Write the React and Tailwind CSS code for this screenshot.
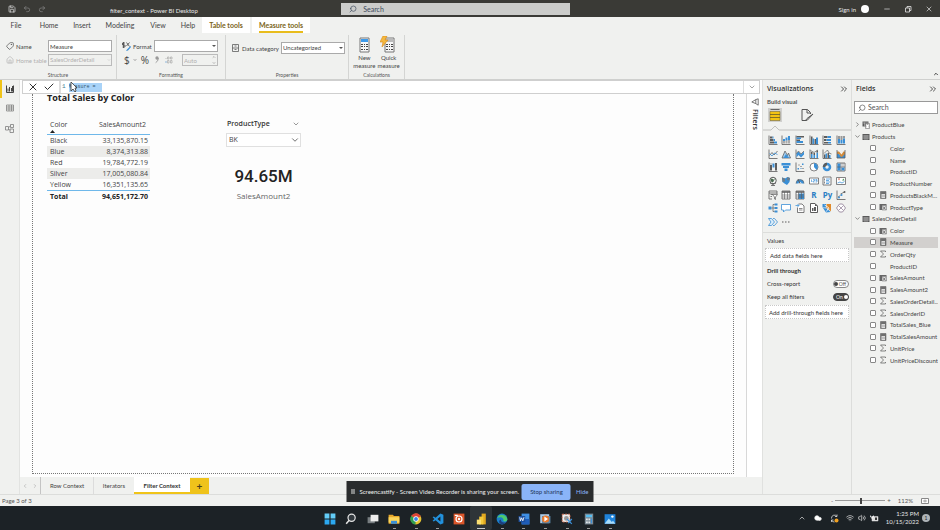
import React, { useState } from 'react';
import { ChevronDown, ChevronRight, ChevronUp, ChevronsRight, Search, X, Check, Minus, Undo2, Redo2, Save, Tag, House, Wifi, Volume2, Cloud } from 'lucide-react';

const INK = '#5c5c5c';
const BLUE = '#3a8fd6';

const menuTabs = [
  { name: 'File', cls: 'w-8' },
  { name: 'Home', cls: 'w-[34px]' },
  { name: 'Insert', cls: 'w-8' },
  { name: 'Modeling', cls: 'w-11' },
  { name: 'View', cls: 'w-8' },
  { name: 'Help', cls: 'w-7' },
];

const salesRows = [
  ['Black', '33,135,870.15'],
  ['Blue', '8,374,313.88'],
  ['Red', '19,784,772.19'],
  ['Silver', '17,005,080.84'],
  ['Yellow', '16,351,135.65'],
];

const fieldTree = [
  { name: 'ProductBlue', kind: 'calcTable', group: true },
  { name: 'Products', kind: 'table', group: true, open: true },
  { name: 'Color' },
  { name: 'Name' },
  { name: 'ProductID' },
  { name: 'ProductNumber' },
  { name: 'ProductsBlackM...', kind: 'measure' },
  { name: 'ProductType', kind: 'column' },
  { name: 'SalesOrderDetail', kind: 'table', group: true, open: true },
  { name: 'Color', kind: 'column' },
  { name: 'Measure', kind: 'measure', selected: true },
  { name: 'OrderQty', kind: 'sum' },
  { name: 'ProductID' },
  { name: 'SalesAmount', kind: 'column' },
  { name: 'SalesAmount2', kind: 'measure' },
  { name: 'SalesOrderDetail...', kind: 'sum' },
  { name: 'SalesOrderID', kind: 'sum' },
  { name: 'TotalSales_Blue', kind: 'measure' },
  { name: 'TotalSalesAmount', kind: 'measure' },
  { name: 'UnitPrice', kind: 'sum' },
  { name: 'UnitPriceDiscount', kind: 'sum' },
];

// ---------- visual gallery icons, all on a 20x20 grid ----------
const Axis = () => <path d="M2 1v18h17" stroke={INK} strokeWidth="1.6" fill="none" />;

const visuals = [
  { name: 'Stacked bar chart', art: <><Axis /><path d="M4 3h5v4H4zM4 8h7v4H4zM4 13h8v4H4z" fill={INK} /><path d="M9 3h2v4H9zM11 8h3v4h-3zM12 13h6v4h-6z" fill={BLUE} /></> },
  { name: 'Stacked column chart', art: <><Axis /><path d="M4 11h4v6H4zM9 11h4v6H9zM14 8h4v9h-4z" fill="#aaa" /><path d="M4 8h4v4H4zM9 5h4v6H9zM14 2h4v8h-4z" fill={BLUE} /></> },
  { name: 'Clustered bar chart', art: <><Axis /><path d="M3 2h15v3H3zM3 9h7v3H3z" fill={INK} /><path d="M3 5h9v3H3zM3 12h13v4H3z" fill={BLUE} /></> },
  { name: 'Clustered column chart', art: <><Axis /><path d="M4 3h3v15H4zM11 8h3v10h-3z" fill={INK} /><path d="M7 7h3v11H7zM14 5h4v13h-4z" fill={BLUE} /></> },
  { name: '100% stacked bar chart', art: <><Axis /><path d="M4 2h7v4H4zM4 8h5v4H4zM4 14h8v3H4z" fill={INK} /><path d="M11 2h7v4h-7zM9 8h9v4H9zM12 14h6v3h-6z" fill={BLUE} /></> },
  { name: '100% stacked column chart', art: <><Axis /><path d="M4 2h4v6H4zM9 2h4v8H9zM14 2h4v5h-4z" fill="#999" /><path d="M4 8h4v9H4zM9 10h4v7H9zM14 7h4v10h-4z" fill={BLUE} /></> },
  { name: 'Line chart', art: <><Axis /><path d="M3 13l5-6 4 5 7-8" stroke={INK} strokeWidth="1.6" fill="none" /><path d="M3 9l5 5 5-6 6 3" stroke={BLUE} strokeWidth="1.6" fill="none" /></> },
  { name: 'Area chart', art: <><path d="M2 18l6-14 5 14zM9 18l5-9 5 9z" fill="#9fcdf2" /><path d="M2 18l6-14 5 9 2-5 4 10z" stroke={INK} strokeWidth="1.5" fill="none" /><path d="M5 18l5-8 6 8z" fill={BLUE} /></> },
  { name: 'Stacked area chart', art: <><Axis /><path d="M3 9l4-4 5 6 6-6v6l-6 6-5-5-4 5z" fill={BLUE} /><path d="M3 9l4-5 5 6 6-6" stroke={INK} strokeWidth="1.4" fill="none" /></> },
  { name: 'Line and stacked column chart', art: <><Axis /><path d="M4 10h3v8H4zM9 12h3v6H9zM15 7h3v11h-3z" fill={BLUE} /><path d="M4 6h3v4H4zM9 8h3v4H9zM15 3h3v4h-3z" fill={INK} /><path d="M3 3l7 4 8-5" stroke={INK} strokeWidth="1.4" fill="none" /></> },
  { name: 'Line and clustered column chart', art: <><Axis /><path d="M4 11h3v7H4zM11 8h3v10h-3z" fill={INK} /><path d="M7 9h3v9H7zM14 12h3v6h-3z" fill={BLUE} /><path d="M4 9l7-7 3 6 5 2" stroke={INK} strokeWidth="1.4" fill="none" /></> },
  { name: 'Ribbon chart', art: <><path d="M2 10h4l5 5 4-5h3v8H2z" fill={BLUE} /><path d="M2 5h4l5 6 4-6h3v5l-6 6-3-1-3-5H2z" fill="#d18b3c" /><path d="M2 2v16h16V2" stroke={INK} strokeWidth="1.6" fill="none" /></> },
  { name: 'Waterfall chart', art: <><Axis /><path d="M4 6h4v11H4zM14 2h4v15h-4z" fill={INK} /><path d="M9 3h4v8H9z" fill={BLUE} /><path d="M4 4h5" stroke={INK} /></> },
  { name: 'Funnel chart', art: <path d="M1 2h18v5H1zM4 8h12v4H4zM7 13h6v5H7z" fill={BLUE} /> },
  { name: 'Scatter chart', art: <><Axis /><path d="M5 12h3v3H5zM14 3h3v3h-3zM11 12h2v2h-2z" fill={BLUE} /><path d="M7 5h2v2H7zM15 12h2v2h-2zM11 8h2v2h-2z" fill={INK} /></> },
  { name: 'Pie chart', art: <><circle cx="10" cy="10" r="8" stroke={INK} strokeWidth="1.5" fill="#fff" /><path d="M10 10V2a8 8 0 0 1 5 14z" fill={BLUE} /></> },
  { name: 'Donut chart', art: <><circle cx="10" cy="10" r="6" stroke={BLUE} strokeWidth="5" fill="none" /><path d="M10 4a6 6 0 0 0-6 6" stroke={INK} strokeWidth="5" fill="none" /></> },
  { name: 'Treemap', art: <><path d="M2 2h16v16H2z" stroke={INK} strokeWidth="1.6" fill="#fff" /><path d="M3 3h6v14H3zM11 11h6v6h-6z" fill={BLUE} /><path d="M10 2v16M10 10h8M14 2v8M2 10h8" stroke={INK} strokeWidth="1.2" /></> },
  { name: 'Map', art: <><circle cx="10" cy="9" r="6.5" stroke={INK} strokeWidth="2" fill="#fff" /><path d="M6 5l5 1 1 4-3 3-4-3zM12 4l3 3-1 3z" fill="#4b6b50" /><path d="M4 14q6 5 12 0M10 16v3M6 19h8" stroke={INK} strokeWidth="1.6" fill="none" /></> },
  { name: 'Filled map', art: <><path d="M2 3l6 2 5-3 5 2-1 8-5 6-5-3-4-3z" fill={BLUE} /><path d="M2 3l6 2v6l-5 1zM13 2l5 2-1 5-5-1z" fill="#6d7d8a" /></> },
  { name: 'Gauge', art: <><path d="M2 15a8 8 0 0 1 16 0h-5a3 3 0 0 0-6 0z" fill={BLUE} /><path d="M10 15L6 6" stroke={INK} strokeWidth="2" /><path d="M2 15a8 8 0 0 1 16 0" stroke={INK} strokeWidth="1.2" fill="none" /></> },
  { name: 'Card', art: <><path d="M1 4h18v12H1z" stroke={INK} strokeWidth="1.5" fill="#fff" /><path d="M5 7v5M8 7h3v3H8v2h3M13 7h3v5h-3M13 9h3" stroke={BLUE} strokeWidth="1.3" fill="none" /></> },
  { name: 'Multi-row card', art: <><path d="M2 2h16v16H2z" stroke={INK} strokeWidth="1.6" fill="#fff" /><path d="M5 5v4M5 11v4" stroke={INK} strokeWidth="1.5" /><path d="M8 6h8M8 9h6M8 12h8M8 15h6" stroke={BLUE} strokeWidth="1.5" /></> },
  { name: 'KPI', art: <><path d="M1 3h18v14H1z" stroke={INK} strokeWidth="1.5" fill="#fff" /><path d="M4 5l2 4 2-4z" fill="#c55a3c" /><path d="M12 9l3-4 2 4z" fill="#4c9a5a" /><path d="M3 14l5-2 4 2 5-3" stroke={BLUE} strokeWidth="1.5" fill="none" /></> },
  { name: 'Slicer', art: <><path d="M8 18H2V2h16v6M2 6h16M5 9h5M5 13h3" stroke={INK} strokeWidth="1.6" fill="none" /><path d="M9 9h10l-4 5v5l-2-1v-4z" stroke={INK} strokeWidth="1.4" fill="#fff" /></> },
  { name: 'Table', art: <><path d="M2 2h16v16H2z" stroke={INK} strokeWidth="1.6" fill="#fff" /><path d="M2 4h16" stroke={INK} strokeWidth="3" /><path d="M2 10h16M2 14h16M7 4v14M13 4v14" stroke={INK} strokeWidth="1.2" /></> },
  { name: 'Matrix', art: <><path d="M2 2h16v16H2z" stroke={INK} strokeWidth="1.6" fill="#fff" /><path d="M7 7h11v11H7z" fill={BLUE} /><path d="M2 4h16" stroke={INK} strokeWidth="3" /><path d="M2 10h16M2 14h16M7 4v14M13 4v14" stroke={INK} strokeWidth="1.2" /></> },
  { name: 'R script visual', letters: 'R' },
  { name: 'Python visual', letters: 'Py' },
  { name: 'Key influencers', art: <><Axis /><path d="M4 14l5-3M9 8l8-4" stroke={INK} strokeWidth="1.5" /><circle cx="11" cy="10" r="2" fill={BLUE} /><circle cx="17" cy="4" r="2" fill={INK} /><circle cx="6" cy="15" r="2" fill={BLUE} /></> },
  { name: 'Decomposition tree', art: <><path d="M1 7h6v6H1zM13 1h6v4h-6zM13 8h6v4h-6zM13 15h6v4h-6z" fill={BLUE} /><path d="M7 10h6M13 3h-3v14h3" stroke={INK} strokeWidth="1.4" fill="none" /></> },
  { name: 'Q&A', art: <path d="M1 3h18v11H9l-4 4v-4H1z" stroke={BLUE} strokeWidth="1.6" fill="#fff" /> },
  { name: 'Smart narrative', art: <><path d="M7 2h7l4 4v13H5V9" stroke={INK} strokeWidth="1.6" fill="#fff" /><path d="M1 5h7M5 2l3 3-3 3" stroke={BLUE} strokeWidth="1.5" fill="none" /><path d="M8 11h7M8 14h7" stroke={INK} strokeWidth="1.4" /></> },
  { name: 'Paginated report', art: <><path d="M3 1h9l5 5v13H3z" stroke={INK} strokeWidth="2" fill="#fff" /><path d="M6 10h3v6H6zM10 8h4v8h-4z" fill={INK} /><path d="M12 1v5h5z" fill={INK} /></> },
  { name: 'ArcGIS map', art: <><path d="M1 2h7v7H1z" fill={BLUE} /><path d="M9 2h9v9H9z" fill="#e08a2c" /><path d="M2 10l8 1 7 7-9 1z" fill={BLUE} /><path d="M13 12l5-3v8z" fill="#e08a2c" /><path d="M5 4l8 5-4 8" stroke="#fff" strokeWidth="1.6" fill="none" /></> },
  { name: 'Power Apps', art: <><path d="M7 2h6l6 8-6 8H7l-6-8z" stroke="#8c7a92" strokeWidth="1.6" fill="#fff" /><path d="M6 6l8 8M14 6l-8 8" stroke="#8c7a92" strokeWidth="1.4" /></> },
  { name: 'Power Automate', art: <><path d="M1 3h6l6 7-6 7H1l5-7z" stroke={BLUE} strokeWidth="1.6" fill="#dceefb" /><path d="M10 3h3l6 7-6 7h-3" stroke={BLUE} strokeWidth="1.6" fill="none" /></> },
  { name: 'Get more visuals', art: <path d="M2 9h3v2H2zM8 9h3v2H8zM14 9h3v2h-3z" fill={INK} /> },
];

const FieldIcon = ({ kind }) => {
  if (!kind) return <span className="w-2 shrink-0" />;
  return (
    <svg viewBox="0 0 16 16" className="size-2 shrink-0" aria-hidden="true">
      {kind === 'sum' && <path d="M13 4V2H3l6 6-6 6h10v-2" stroke="#555" strokeWidth="1.4" fill="none" />}
      {kind === 'measure' && (
        <>
          <path d="M3 1h11v14H3z" fill="#777" stroke="#555" />
          <path d="M5 6h7v8H5z" fill="#dcdcdc" />
          <path d="M5 3h7v2H5zM6 8h1v1H6zM8 8h1v1H8zM10 8h1v1h-1zM6 11h1v1H6zM8 11h1v1H8zM10 11h1v1h-1z" fill="#666" />
        </>
      )}
      {kind === 'table' && (
        <>
          <path d="M1 2h14v12H1z" fill="#5a5a5a" />
          <path d="M1 6h14M1 10h14M6 4v10M10 4v10" stroke="#d5d5d5" />
        </>
      )}
      {kind === 'calcTable' && (
        <>
          <path d="M1 1h12v10H1z" fill="#5a5a5a" />
          <path d="M1 4h12M5 3v8" stroke="#d5d5d5" />
          <path d="M7 5h8v10H7z" fill="#fff" stroke="#555" />
          <path d="M9 7h4M9 10h1M12 10h1M9 12h1M12 12h1" stroke="#555" />
        </>
      )}
      {kind === 'column' && (
        <>
          <path d="M1 2h14v3H1zM1 5h5v9H1z" fill="#666" />
          <path d="M6 5h9v9H6z" fill="#ddd" stroke="#666" />
          <path d="M8 7l5 6M13 7l-5 6" stroke="#555" strokeWidth="1.4" />
        </>
      )}
    </svg>
  );
};

const Calculator = ({ quick }) => (
  <svg viewBox="0 0 18 18" className="size-[18px]" aria-hidden="true">
    <path d="M5 2h9v14H5z" fill="#f7f7f7" stroke="#777" />
    <path d="M6 3h7v3H6z" fill={quick ? '#bbb' : '#3e9bea'} />
    <path d="M6 8h2v1H6zM9 8h1v1H9zM11 8h2v1h-2zM6 10h2v1H6zM9 10h1v1H9zM11 10h2v1h-2zM6 13h2v1H6zM9 13h1v1H9zM11 13h2v1h-2z" fill="#444" />
    {quick && <path d="M3 0h4L5 4h3L2 11l1-5H0z" fill="#f5b93e" stroke="#d98718" strokeWidth=".6" />}
  </svg>
);

const taskApps = [
  { name: 'Start', art: <><path d="M1 1h8v8H1zM11 1h8v8h-8z" fill="#63cdf8" /><path d="M1 11h8v8H1zM11 11h8v8h-8z" fill="#2ca8f0" /></> },
  { name: 'Search', art: <><circle cx="11" cy="8" r="6" stroke="#e5e5e5" strokeWidth="2" fill="#333a3f" /><path d="M7 12l-5 6" stroke="#e5e5e5" strokeWidth="2.4" /></> },
  { name: 'Task view', art: <><path d="M1 7h12v10H1z" fill="#777d80" /><path d="M6 3h13v11H6z" fill="#ececec" /></> },
  { name: 'File Explorer', running: true, art: <><path d="M1 3h7l2 2h9v13H1z" fill="#e7a92c" /><path d="M1 7h18v9H1z" fill="#fbd65c" /><path d="M5 13h10v5H5z" fill="#3a8fd6" /></> },
  { name: 'Chrome', running: true, art: <><circle cx="10" cy="10" r="9" fill="#e5c32f" /><path d="M10 10L2 5a9 9 0 0 1 16 1z" fill="#dc4437" /><path d="M10 10L2 5a9 9 0 0 0 7 14z" fill="#2f9e50" /><circle cx="10" cy="10" r="4.5" fill="#fff" /><circle cx="10" cy="10" r="3.2" fill="#3d82e8" /></> },
  { name: 'VS Code', running: true, art: <path d="M14 1l5 2v14l-5 2-8-7-3 2-2-1 3-3-3-3 2-1 3 2zM14 6l-5 4 5 4z" fillRule="evenodd" fill="#2291dc" /> },
  { name: 'Ubuntu', art: <><path d="M1 1h18v18H1z" fill="#db562a" /><circle cx="10" cy="10" r="5" stroke="#fff" strokeWidth="2" fill="none" /><circle cx="10" cy="10" r="2" fill="#fff" /><path d="M3 3h5v2H3z" fill="#fff" /></> },
  { name: 'Power BI Desktop', active: true, art: <><path d="M11 1h7v18h-7z" fill="#e2a81f" /><path d="M7 6h7v13H7z" fill="#f3c93a" /><path d="M3 11h7v8H3z" fill="#fbdf72" /></> },
  { name: 'Edge', running: true, art: <><circle cx="10" cy="10" r="9" fill="#1b7fc9" /><path d="M2 8a9 9 0 0 1 17 3c0 3-5 4-7 2 2-4-3-8-10-5z" fill="#4cc96f" /><path d="M8 11c0 5 5 6 9 4-2 4-8 5-11 2-2-3 0-5 2-6z" fill="#1c3f7c" /></> },
  { name: 'Word', running: true, art: <><path d="M6 1h13v18H6z" fill="#3f8fe3" /><path d="M6 10h13v9H6z" fill="#1f5db8" /><path d="M1 5h11v10H1z" fill="#1c4f9e" /><path d="M3 7l1 6 2-5 2 5 2-6" stroke="#fff" strokeWidth="1.4" fill="none" /></> },
  { name: 'Media player', running: true, art: <><path d="M2 2h15v15H2z" fill="#a9cbe8" /><path d="M5 5h14v12H5z" fill="#5e87a8" /><circle cx="11" cy="10" r="6" fill="#ec7b2d" /><path d="M9 6l6 4-6 4z" fill="#fff" /></> },
  { name: 'Snipping Tool', running: true, art: <><path d="M2 2h13v13H2z" fill="#eee" stroke="#d56c4c" strokeWidth="1.5" strokeDasharray="3 2" /><circle cx="9" cy="9" r="4" fill="#999" /><path d="M10 10l8 8M18 10l-6 7" stroke="#3a92dc" strokeWidth="2" /></> },
  { name: 'Calculator', running: true, art: <><path d="M3 1h14v18H3z" fill="#7c8b96" /><path d="M5 3h10v4H5z" fill="#55bdf0" /><path d="M5 9h3v3H5zM9 9h3v3H9zM5 14h3v3H5zM9 14h3v3H9z" fill="#e0e5e8" /><path d="M13 9h2v8h-2z" fill="#3a8fd6" /></> },
  { name: 'Photos', running: true, art: <><path d="M1 2h18v16H1z" fill="#1f83da" /><path d="M1 18l7-9 5 6 2-2 4 5z" fill="#a8dcfa" /><circle cx="14" cy="6" r="2" fill="#fff" /></> },
];

const TitleBar = () => (
  <header className="grid h-[17px] grid-cols-[12fr_229px_13fr] items-center bg-[#3a3a36] text-[6px] text-[#e6e6e6]">
    <div className="flex items-center pl-2">
      <button aria-label="Save"><Save className="size-2" /></button>
      <button aria-label="Undo" className="ml-[7px] text-[#888]"><Undo2 className="size-2" /></button>
      <button aria-label="Redo" className="ml-[7px] text-[#888]"><Redo2 className="size-2" /></button>
      <h1 className="ml-16 pt-1">filter_context - Power BI Desktop</h1>
    </div>
    <label className="flex h-3 items-center bg-[#cbccca] pl-2 text-[#3c4a5c]">
      <Search className="size-2 -scale-x-100" />
      <input aria-label="Search" placeholder="Search" className="ml-[6px] w-40 text-[7px] leading-3 placeholder:text-[#3c4a5c] focus:outline-none" />
    </label>
    <div className="flex items-center justify-end pt-px pr-[7px]">
      <button>Sign in</button>
      <span className="ml-[5px] size-2 rounded-full bg-white" />
      <button aria-label="Minimize" className="ml-[14px]"><Minus className="size-2" /></button>
      <button aria-label="Restore" className="ml-[13px]">
        <svg viewBox="0 0 8 8" className="size-2"><path d="M1.500 3h4v4h-4zM3 3V1.500h4v4H5.500" stroke="#e6e6e6" strokeWidth=".8" fill="none" /></svg>
      </button>
      <button aria-label="Close" className="ml-[13px]"><X className="size-2" /></button>
    </div>
  </header>
);

const MenuTabs = () => (
  <nav className="flex h-4 items-stretch text-[7px] text-[#444]">
    {menuTabs.map((tab) => (
      <button key={tab.name} className={tab.cls}>{tab.name}</button>
    ))}
    <button className="w-12 bg-white font-bold text-[#7a6420]">Table tools</button>
    <button className="ml-[2px] flex w-[58px] items-center justify-center bg-white font-bold text-[#7a6420]">
      <span className="border-b-2 border-[#e8bc1c] pt-[2px] leading-3">Measure tools</span>
    </button>
  </nav>
);

const RibbonGroup = ({ title, className, children }) => (
  <section className={`flex flex-col border-r border-[#d4d5d3] ${className}`}>
    <div className="flex-1">{children}</div>
    <h2 className="text-center text-[5px] leading-[7px] text-[#555]">{title}</h2>
  </section>
);

const Ribbon = () => (
  <div className="flex h-[47px] border-b border-[#cfd0ce] pt-[2px] text-[6px] text-[#444]">
    <RibbonGroup title="Structure" className="w-[117px]">
      <div className="grid grid-cols-[42px_64px] gap-y-[2px] pt-[5px] pl-[6px]">
        <label htmlFor="measure-name" className="flex items-center gap-[2px]"><Tag className="size-2 -scale-x-100" />Name</label>
        <input id="measure-name" defaultValue="Measure" className="h-3 border border-[#aaa] bg-white px-px leading-[10px]" />
        <label htmlFor="home-table" className="flex items-center gap-[2px] whitespace-nowrap text-[#b0b0b0]"><House className="size-2 shrink-0" />Home table</label>
        <span className="relative">
          <select id="home-table" disabled className="block h-3 w-full appearance-none border border-[#bbb] px-px leading-[10px] text-[#b0b0b0] opacity-100">
            <option>SalesOrderDetail</option>
          </select>
          <ChevronDown className="absolute top-1 right-px size-1 text-[#aaa]" />
        </span>
      </div>
    </RibbonGroup>
    <RibbonGroup title="Formatting" className="w-[109px]">
      <div className="flex items-center pt-[5px] pl-[5px]">
        <svg viewBox="0 0 18 18" className="mr-[2px] size-[9px]" aria-hidden="true">
          <path d="M6 2H1v4h5v4H1M3 0v12M9 1l6 8M9 8l6-7" stroke="#444" strokeWidth="1.6" fill="none" />
          <path d="M17 8l-7 7-2 3 4-1 6-7z" fill={BLUE} />
        </svg>
        <label htmlFor="format">Format</label>
        <span className="relative ml-[2px] w-16">
          <select id="format" className="block h-3 w-full appearance-none border border-[#aaa] bg-white px-px"><option></option></select>
          <svg viewBox="0 0 4 4" className="absolute top-1 right-[2px] size-1"><path d="M0 1h4L2 3z" fill="#555" /></svg>
        </span>
      </div>
      <div className="flex items-center pt-[2px] pl-[7px] font-['Open_Sans',sans-serif] text-[10px] leading-3">
        <button>$</button>
        <button aria-label="Currency formats" className="ml-[3px]"><ChevronDown className="size-1" strokeWidth={3} /></button>
        <button className="ml-1">%</button>
        <button aria-label="Thousands separator" className="ml-[6px]">
          <svg viewBox="0 0 6 12" className="h-2 w-1"><circle cx="3" cy="3" r="2.500" fill="#999" /><path d="M5 3q0 5-4 7" stroke="#999" strokeWidth="1.500" fill="none" /></svg>
        </button>
        <svg viewBox="0 0 16 16" className="ml-[6px] size-2" aria-hidden="true">
          <path d="M5 2h3v4H5zM11 2h3v4h-3zM5 9h3v5H5zM11 9h3v5h-3zM1 5h2" stroke="#aaa" strokeWidth="1.4" fill="none" />
          <path d="M0 12h4" stroke="#76a9d6" strokeWidth="1.6" />
        </svg>
        <span className="relative ml-[9px] w-9 font-['Lato',sans-serif]">
          <input aria-label="Decimal places" disabled defaultValue="Auto" className="block h-3 w-full border border-[#bbb] px-px text-[6px] leading-[10px] text-[#b0b0b0]" />
          <ChevronUp className="absolute top-px right-[2px] size-1" />
          <ChevronDown className="absolute right-[2px] bottom-px size-1" />
        </span>
      </div>
    </RibbonGroup>
    <RibbonGroup title="Properties" className="w-[123px]">
      <div className="flex items-center pt-[7px] pl-[6px]">
        <svg viewBox="0 0 14 16" className="mr-[3px] h-2 w-[7px]" aria-hidden="true">
          <path d="M1 1h12v14H1zM1 8h12M5 4h4M5 11h4" stroke="#555" strokeWidth="1.5" fill="none" />
        </svg>
        <label htmlFor="category" className="whitespace-nowrap">Data category</label>
        <span className="relative ml-[2px] w-16">
          <select id="category" className="block h-3 w-full appearance-none border border-[#aaa] bg-white px-px leading-[10px]"><option>Uncategorized</option></select>
          <svg viewBox="0 0 4 4" className="absolute top-1 right-[2px] size-1"><path d="M0 1h4L2 3z" fill="#555" /></svg>
        </span>
      </div>
    </RibbonGroup>
    <RibbonGroup title="Calculations" className="w-14">
      <div className="flex justify-center gap-[2px] pt-px leading-2">
        <button className="flex flex-col items-center"><Calculator />New<br />measure</button>
        <button className="flex flex-col items-center"><Calculator quick />Quick<br />measure</button>
      </div>
    </RibbonGroup>
    <button aria-label="Collapse the ribbon" className="mr-px ml-auto self-end pb-[2px]"><ChevronUp className="size-[6px]" strokeWidth={4} /></button>
  </div>
);

const ViewRail = () => (
  <nav className="w-5 shrink-0 border-r border-[#e2e3e1] text-[#777]">
    <button aria-label="Report view" className="flex h-[18px] w-full items-center border-l-2 border-[#f0c419] pl-1">
      <svg viewBox="0 0 16 16" className="size-2"><path d="M1 1v14h14V1M4 7v6M7 4v9M11 6v7M13 2v11" stroke="#444" strokeWidth="2" fill="none" /></svg>
    </button>
    <button aria-label="Data view" className="flex h-5 w-full items-center pl-[6px]">
      <svg viewBox="0 0 16 16" className="size-2"><path d="M1 2h14v12H1zM1 6h14M1 10h14M6 2v12M11 2v12" stroke="#777" strokeWidth="1.4" fill="none" /></svg>
    </button>
    <button aria-label="Model view" className="flex h-5 w-full items-center pl-[5px]">
      <svg viewBox="0 0 18 18" className="size-[9px]"><path d="M1 5h6v7H1zM11 1h6v6h-6zM10 10h7v7h-7zM7 7l4-3M7 10l3 3" stroke="#777" strokeWidth="1.5" fill="none" /></svg>
    </button>
  </nav>
);

const FormulaBar = () => (
  <div className="relative mr-[2px] ml-[2px] flex h-[14px] items-center border border-[#cfcfcf] bg-white">
    <button aria-label="Cancel" className="ml-1"><X className="size-3 text-[#333]" strokeWidth={2} /></button>
    <button aria-label="Commit" className="ml-1"><Check className="size-3 text-[#333]" strokeWidth={2} /></button>
    <span className="ml-1 h-full border-l-2 border-[#ddd] pl-px font-['Liberation_Mono',monospace] text-[6px] leading-3 text-[#3f7c93]">1</span>
    <input aria-label="Formula" defaultValue="Measure = " className="ml-[3px] h-[9px] w-[33px] bg-[#a9d3f8] font-['Liberation_Mono',monospace] text-[5px] text-[#31546e] focus:outline-none" />
    <svg viewBox="0 0 8 12" className="absolute top-0 left-[47px] h-3 w-2" aria-hidden="true">
      <path d="M1 1v9l2-2 2 3 1-1-1-3h2z" fill="#fff" stroke="#333" strokeWidth=".8" />
    </svg>
    <button aria-label="Expand formula bar" className="ml-auto flex h-full w-4 items-center justify-center border-l border-[#ddd]"><ChevronDown className="size-2 text-[#777]" strokeWidth={2} /></button>
  </div>
);

const SalesTable = () => (
  <table className="w-[103px] border-collapse text-[7px] leading-[11px] text-[#444]">
    <thead>
      <tr className="h-[15px] border-b border-[#6fb8ea] align-top">
        <th className="pl-[3px] text-left font-normal">
          Color
          <svg viewBox="0 0 5 3" className="h-[3px] w-[5px]" aria-label="sorted ascending"><path d="M0 3h5L2.500 0z" fill="#222" /></svg>
        </th>
        <th className="pr-1 text-right font-normal">SalesAmount2</th>
      </tr>
    </thead>
    <tbody>
      {salesRows.map(([color, amount]) => (
        <tr key={color} className="even:bg-[#ececea]">
          <td className="pl-[3px]">{color}</td>
          <td className="pr-[2px] text-right">{amount}</td>
        </tr>
      ))}
    </tbody>
    <tfoot>
      <tr className="border-t border-[#6fb8ea] font-bold text-[#222]">
        <td className="pl-[3px]">Total</td>
        <td className="pr-[2px] text-right">94,651,172.70</td>
      </tr>
    </tfoot>
  </table>
);

const ReportCanvas = () => (
  <main className="min-w-0 flex-1 bg-[#fdfdfd] pr-3 pb-[3px] pl-3 font-['Open_Sans','Noto_Sans',sans-serif]">
    <div className="h-full border border-t-0 border-dotted border-[#777] pl-[14px]">
      <h2 className="text-[9px] leading-[8px] font-bold text-[#222]">Total Sales by Color</h2>
      <div className="flex items-start pt-[17px]">
        <SalesTable />
        <div className="ml-[76px] w-[75px]">
          <div className="flex items-center justify-between pr-px pl-px text-[7px] leading-[10px] font-semibold text-[#333]">
            <label htmlFor="product-type">ProductType</label>
            <ChevronDown className="size-2 text-[#666]" strokeWidth={2} />
          </div>
          <div className="relative mt-1">
            <select id="product-type" className="block h-[14px] w-full appearance-none border border-[#e0e0e0] bg-white pl-[2px] text-[7px] leading-3 text-[#444]"><option>BK</option></select>
            <ChevronDown className="absolute top-[2px] right-px size-[10px] text-[#555]" strokeWidth={2} />
          </div>
          <div className="pt-[19px] text-center">
            <p className="font-['Roboto',sans-serif] text-[17px] leading-5 font-medium text-[#222]">94.65M</p>
            <p className="pt-1 text-[8px] leading-3 text-[#666]">SalesAmount2</p>
          </div>
        </div>
      </div>
    </div>
  </main>
);

const FiltersRail = () => (
  <aside className="flex w-4 shrink-0 flex-col items-center border-l border-[#d8d8d8] bg-white pt-1 font-['Open_Sans',sans-serif]">
    <button aria-label="Expand filters"><svg viewBox="0 0 10 10" className="size-2"><path d="M9 1v8L6 7 1 5l5-3zM6 2v5" stroke="#555" fill="none" /></svg></button>
    <h2 className="mt-[3px] text-[7px] leading-2 font-semibold text-[#333] [writing-mode:vertical-rl]">Filters</h2>
  </aside>
);

const PageTabs = () => (
  <nav className="flex h-[17px] shrink-0 items-stretch text-[6px] text-[#444]">
    <button aria-label="Previous page" className="w-[10px] pl-[2px]"><ChevronRight className="size-[6px] rotate-180 text-[#999]" /></button>
    <button aria-label="Next page" className="w-[10px] pl-[2px]"><ChevronRight className="size-[6px] text-[#999]" /></button>
    <button className="w-[53px] border-l border-[#c4c4c4]">Row Context</button>
    <button className="w-[41px] border-l border-[#dcdcdc]">Iterators</button>
    <button className="w-14 border-b-2 border-[#f0c419] bg-white pt-[2px] font-bold text-[#333]">Filter Context</button>
    <button aria-label="New page" className="mt-px w-[19px] bg-[#efc31b] text-[10px] leading-4 font-bold text-[#4a421f]">+</button>
  </nav>
);

const Toggle = ({ label, defaultOn }) => {
  const [on, setOn] = useState(defaultOn);
  return (
    <label className="flex h-[13px] items-center justify-between pl-[2px]">
      {label}
      <span className={`relative flex h-2 w-4 items-center gap-px rounded-full border px-[2px] text-[5px] leading-[6px] ${on ? 'border-[#444] bg-[#444] text-white' : 'flex-row-reverse border-[#888] bg-white text-[#555]'}`}>
        <input type="checkbox" role="switch" checked={on} onChange={() => setOn(!on)} className="absolute inset-0 appearance-none" />
        <span className="flex-1">{on ? 'On' : 'Off'}</span>
        <span className={`size-1 shrink-0 rounded-full ${on ? 'bg-white' : 'bg-[#444]'}`} />
      </span>
    </label>
  );
};

const PaneHeader = ({ title }) => (
  <div className="flex items-center justify-between pt-px pr-[2px] pl-1 text-[#333]">
    <h2 className="font-['Open_Sans',sans-serif] text-[7px] leading-4 font-semibold">{title}</h2>
    <button aria-label={`Collapse ${title}`}><ChevronsRight className="size-[10px]" strokeWidth={2} /></button>
  </div>
);

const VisualizationsPane = () => (
  <aside className="w-[89px] shrink-0 border-l border-[#e0e1df] text-[6px] text-[#333]">
    <PaneHeader title="Visualizations" />
    <h3 className="pl-1 leading-[9px] font-bold text-[#555]">Build visual</h3>
    <div className="flex gap-[18px] pt-[2px] pl-[5px]">
      <button aria-label="Build visual" className="bg-[#d0d0ce]">
        <svg viewBox="0 0 28 28" className="size-[14px]">
          <path d="M5 3h18" stroke="#666" strokeWidth="2" />
          <path d="M4 7h20v18H4z" fill="#f2c311" stroke="#665a2a" />
          <path d="M4 13h20M4 19h20" stroke="#665a2a" strokeWidth="1.600" />
        </svg>
      </button>
      <button aria-label="Format visual">
        <svg viewBox="0 0 28 28" className="size-[14px]"><path d="M13 25H4V3h11l6 6v3M14 3v7h6M26 12L15 24l-4 1 3-4z" stroke="#555" strokeWidth="2" fill="none" /></svg>
      </button>
    </div>
    <svg viewBox="0 0 88 7" className="mt-[2px] h-[7px] w-full" preserveAspectRatio="none" aria-hidden="true">
      <path d="M0 6h8l4-4 4 4h72" stroke="#c0c0be" fill="none" />
    </svg>
    <div className="mt-[2px] ml-[3px] grid h-24 w-[82px] grid-cols-6 grid-rows-7 items-center justify-items-center">
      {visuals.map((v) => (
        <button key={v.name} aria-label={v.name} className="flex items-center justify-center">
          {v.letters
            ? <span className="font-['Open_Sans',sans-serif] text-[8px] leading-[10px] font-bold text-[#2d7fc4]">{v.letters}</span>
            : <svg viewBox="0 0 20 20" className="size-[10px]">{v.art}</svg>}
        </button>
      ))}
    </div>
    <div className="mt-[3px] border-t border-[#dcdddb] px-[2px] pt-[3px]">
      <h3 className="pl-[2px] leading-[10px]">Values</h3>
      <div className="mt-[2px] flex h-[14px] items-center border border-dotted border-[#c8c8c8] bg-white pl-1">Add data fields here</div>
      <h3 className="mt-1 mb-px pl-[2px] leading-[10px] font-bold">Drill through</h3>
      <Toggle label="Cross-report" defaultOn={false} />
      <Toggle label="Keep all filters" defaultOn />
      <div className="mt-[2px] flex h-[14px] items-center border border-dotted border-[#c8c8c8] bg-white pl-[3px] whitespace-nowrap">Add drill-through fields here</div>
    </div>
  </aside>
);

const FieldsPane = () => (
  <aside className="w-[89px] shrink-0 border-l border-[#dcdddb] text-[6px] text-[#444]">
    <PaneHeader title="Fields" />
    <label className="mx-[2px] mt-1 flex h-[13px] items-center border border-[#999] bg-white pl-[3px]">
      <Search className="size-2 -scale-x-100 text-[#555]" strokeWidth={2} />
      <input aria-label="Search fields" placeholder="Search" className="ml-[2px] w-16 text-[7px] leading-[11px] placeholder:text-[#555] focus:outline-none" />
    </label>
    <ul className="mx-[2px] mt-[5px] grid h-[247px] auto-rows-fr">
      {fieldTree.map((field, i) => (
        <li key={i} className={`flex items-center overflow-hidden leading-[11px] ${field.selected ? 'bg-[#d2d0ce]' : ''}`}>
          {field.group ? (
            <button className="flex items-center gap-px">
              {field.open ? <ChevronDown className="size-[7px]" /> : <ChevronRight className="size-[7px]" />}
              <FieldIcon kind={field.kind} />
              <span className="pl-px">{field.name}</span>
            </button>
          ) : (
            <label className="flex items-center gap-[3px] pl-4 whitespace-nowrap">
              <input type="checkbox" className="size-[6px] appearance-none rounded-[1px] border border-[#888] bg-white checked:bg-[#555]" />
              <FieldIcon kind={field.kind} />
              {field.name}
            </label>
          )}
        </li>
      ))}
    </ul>
  </aside>
);

const StatusBar = () => (
  <footer className="flex h-3 shrink-0 items-center justify-between border-t border-[#dcdddb] px-[2px] text-[6px] text-[#555]">
    <span>Page 3 of 3</span>
    <div className="flex items-center pr-[9px]">
      <button aria-label="Zoom out">-</button>
      <input
        type="range"
        aria-label="Zoom"
        min="10"
        max="210"
        defaultValue="112"
        className="mx-[2px] h-[6px] w-[50px] appearance-none bg-[linear-gradient(#999,#999)] bg-[length:100%_1px] bg-center bg-no-repeat [&::-webkit-slider-thumb]:h-[6px] [&::-webkit-slider-thumb]:w-[2px] [&::-webkit-slider-thumb]:appearance-none [&::-webkit-slider-thumb]:bg-[#444]"
      />
      <button aria-label="Zoom in">+</button>
      <span className="ml-[7px]">112%</span>
      <button aria-label="Fit to page" className="ml-2">
        <svg viewBox="0 0 16 12" className="h-[6px] w-2"><path d="M1 1h14v10H1z" fill="#fff" stroke="#888" strokeWidth="2" /><path d="M4 6h8M8 3v6" stroke="#888" strokeWidth="1.500" /></svg>
      </button>
    </div>
  </footer>
);

const SharingBar = () => (
  <div className="absolute bottom-7 left-1/2 flex h-[21px] w-[247px] -translate-x-1/2 items-center bg-[#2a2c2d] pl-[5px] text-[6px] whitespace-nowrap text-[#f0f0f0]">
    <span className="h-[5px] w-[3px] border-x border-[#ddd]" />
    <span className="ml-[5px]">Screencastify - Screen Video Recorder is sharing your screen.</span>
    <button className="mr-[5px] ml-auto h-4 w-[49px] rounded-[2px] bg-[#8ab4f8] text-[#1f3557]">Stop sharing</button>
    <button className="mr-[5px] text-[#8ab4f8]">Hide</button>
  </div>
);

const Taskbar = () => (
  <div className="grid h-6 shrink-0 grid-cols-[1fr_302px_1fr] items-center bg-[#1c2226] text-[6px] text-[#e6e6e6]">
    <div className="col-start-2 grid h-full grid-cols-14">
      {taskApps.map((app) => (
        <button key={app.name} aria-label={app.name} className={`flex flex-col items-center justify-end rounded-[2px] pb-px ${app.active ? 'bg-[#2e3438]' : ''}`}>
          <svg viewBox="0 0 20 20" className="mb-[3px] size-3">{app.art}</svg>
          <span className={`h-px ${app.active ? 'w-2 bg-[#c8c8c8]' : app.running ? 'w-[3px] bg-[#999]' : 'w-0'}`} />
        </button>
      ))}
    </div>
    <div className="flex items-center justify-end pr-[10px]">
      <ChevronUp className="size-2" />
      <Cloud className="ml-2 size-2 fill-white" />
      <svg viewBox="0 0 18 18" className="ml-2 size-[9px]" aria-hidden="true">
        <path d="M3 9a6 6 0 0 1 11-4M14 1v4h-4M3 16v-4h4M3 12a6 6 0 0 0 6 4" stroke="#ddd" strokeWidth="1.600" fill="none" />
        <circle cx="13" cy="13" r="4" fill="#f0a020" />
      </svg>
      <Wifi className="ml-[7px] size-2" />
      <Volume2 className="ml-1 size-2" />
      <svg viewBox="0 0 18 14" className="ml-1 h-[7px] w-[9px]" aria-hidden="true">
        <path d="M4 3h12v9H4z" fill="#ddd" stroke="#ddd" />
        <path d="M1 1v3h6V1M4 4v4" stroke="#fff" strokeWidth="1.500" fill="none" />
        <path d="M10 5h4v5h-4z" fill="#333" />
      </svg>
      <div className="ml-[7px] text-right leading-2">
        <p>1:25 PM</p>
        <p>10/15/2022</p>
      </div>
      <span className="ml-[3px] size-2 rounded-full bg-[#aeb4b8] text-center text-[5px] leading-2 text-[#222]">1</span>
    </div>
  </div>
);

const App = () => (
  <div className="relative flex min-h-screen flex-col bg-[#f0f1ef] font-['Lato','Open_Sans',sans-serif]">
    <TitleBar />
    <MenuTabs />
    <Ribbon />
    <div className="flex flex-1">
      <ViewRail />
      <div className="flex min-w-0 flex-1 flex-col">
        <div className="bg-[#fdfdfd]"><FormulaBar /></div>
        <div className="flex flex-1">
          <ReportCanvas />
          <FiltersRail />
        </div>
        <PageTabs />
      </div>
      <VisualizationsPane />
      <FieldsPane />
    </div>
    <StatusBar />
    <Taskbar />
    <SharingBar />
  </div>
);

export default App;
